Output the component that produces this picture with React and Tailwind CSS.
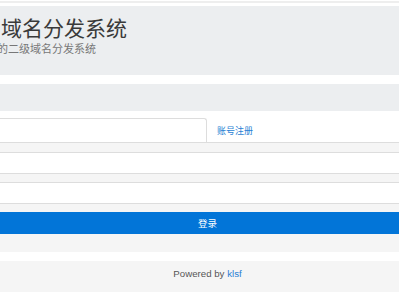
import React from 'react';

const cjk = "font-['Microsoft_YaHei','Noto_Sans_CJK_SC',sans-serif]";

export default function App() {
  return (
    <div className={`w-[399px] h-[300px] overflow-hidden bg-white ${cjk}`}>
      {/* top rule */}
      <div className="mt-px h-[2px] bg-[#eeeeee]" />

      {/* header */}
      <div className="mt-[3px] h-[69px] bg-[#eceef0] pt-[11px] whitespace-nowrap">
        <h1 className="ml-px text-[21px] leading-[21px] text-[#3a3a3a] font-normal">域名分发系统</h1>
        <p className="ml-[-3px] mt-[5px] text-[11px] leading-[11px] text-[#777]">的二级域名分发系统</p>
      </div>

      {/* bar */}
      <div className="mt-[9px] h-[27px] bg-[#eceef0]" />

      {/* tabs */}
      <div className="mt-[7px] flex h-[25px] border-b border-[#dddddd]">
        <div className="w-[207px] bg-white border-t border-r border-[#dddddd] rounded-tr-[3px]" />
        <a className="flex items-center pl-[10px] pt-[1px] text-[9px] text-[#2a7fd4]">账号注册</a>
      </div>

      {/* form */}
      <div className="bg-[#f5f5f5] pt-[9px] pb-[18px] flex flex-col gap-[8px]">
        <input className="h-[22px] w-full bg-white border-y border-[#dddddd] outline-none" />
        <input type="password" className="h-[22px] w-full bg-white border-y border-[#dddddd] outline-none" />
        <button className="h-[22px] w-full bg-[#0275d8] pl-[16px] text-[9.5px] text-white">登录</button>
      </div>

      {/* footer */}
      <div className="mt-[9px] h-[31px] bg-[#f5f5f5] pl-[16px] pt-[5px] text-center text-[9.7px] leading-[15px] font-['Liberation_Sans',sans-serif] text-[#555]">
        Powered by <a className="text-[#2a7fd4]">klsf</a>
      </div>
    </div>
  );
}
